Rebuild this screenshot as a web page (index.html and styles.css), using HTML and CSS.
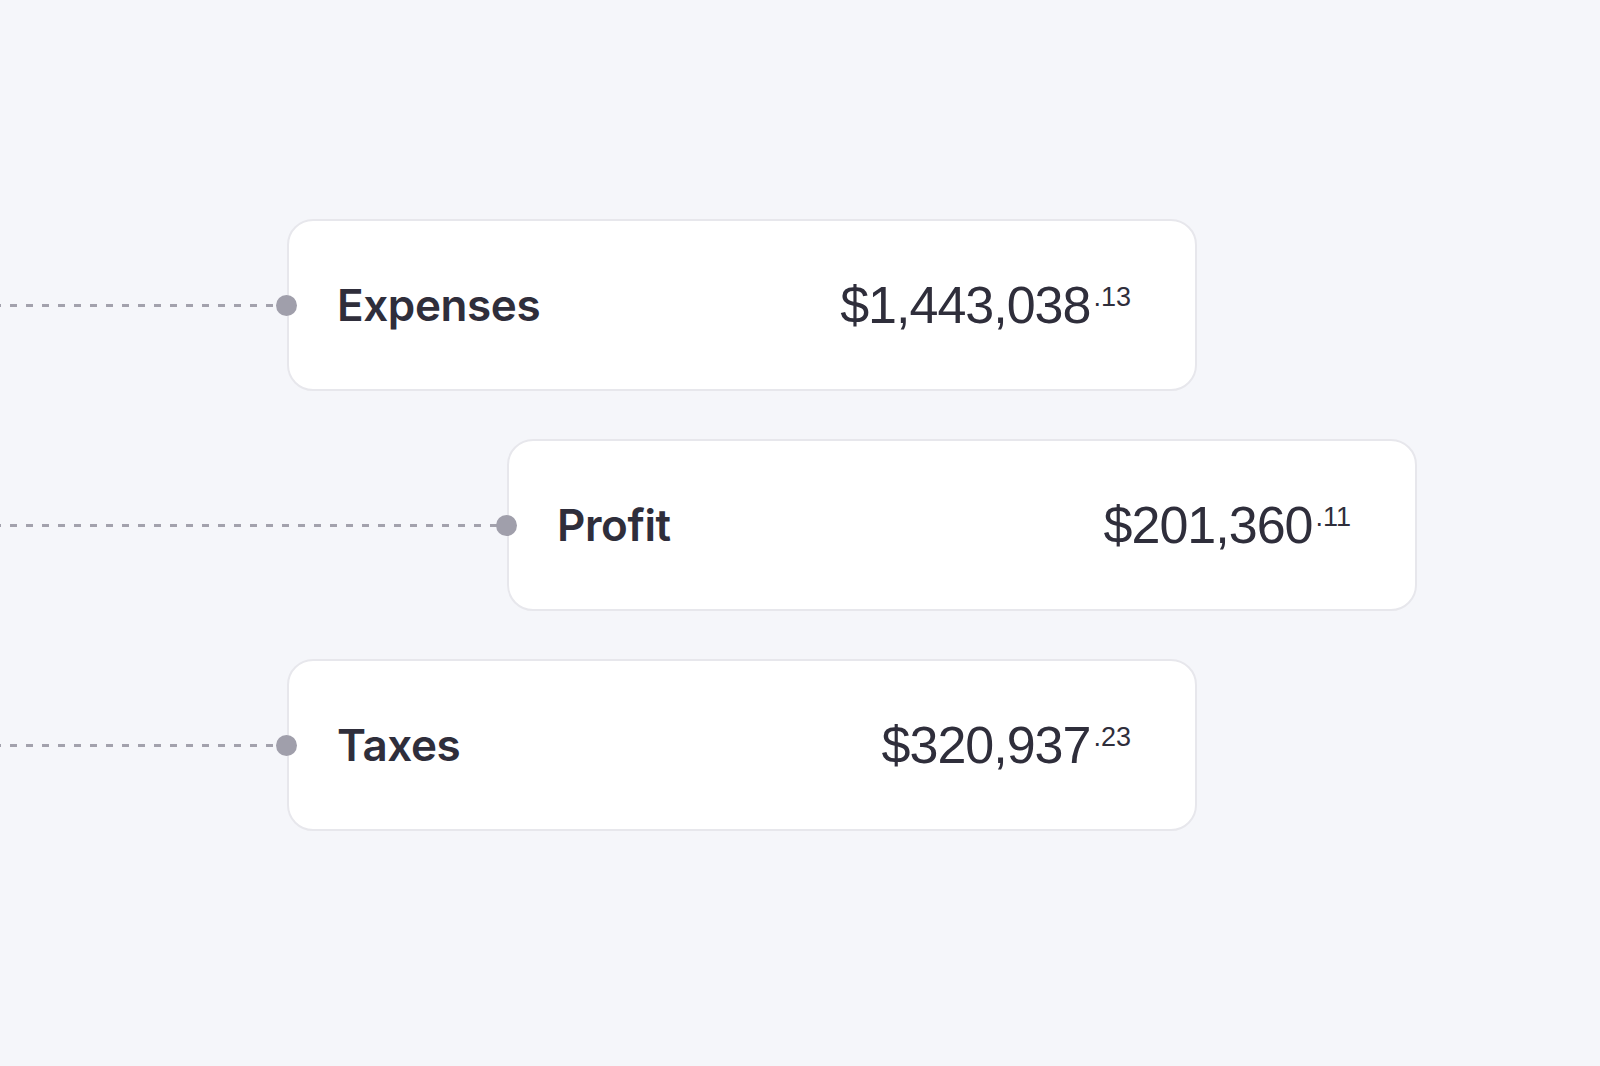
FILE: index.html
```html
<!DOCTYPE html>
<html lang="en">
<head>
  <meta charset="UTF-8">
  <meta name="viewport" content="width=device-width, initial-scale=1.0">
  <title>Breakdown</title>
  <link rel="stylesheet" href="styles.css">
</head>
<body>

  <!-- Breakdown rows: connector line + card -->
  <div class="flow">
    <div class="row">
      <div class="connector short"></div>
      <div class="card">
        <span class="dot"></span>
        <span class="label">Expenses</span>
        <span class="amount"><span class="whole">$1,443,038</span><span class="cents">.13</span></span>
      </div>
    </div>

    <div class="row">
      <div class="connector long"></div>
      <div class="card">
        <span class="dot"></span>
        <span class="label">Profit</span>
        <span class="amount"><span class="whole">$201,360</span><span class="cents">.11</span></span>
      </div>
    </div>

    <div class="row">
      <div class="connector short"></div>
      <div class="card">
        <span class="dot"></span>
        <span class="label">Taxes</span>
        <span class="amount"><span class="whole">$320,937</span><span class="cents">.23</span></span>
      </div>
    </div>
  </div>

</body>
</html>
```

FILE: styles.css
```css
* { margin: 0; padding: 0; box-sizing: border-box; }
body { background: #f5f6fa; font-family: 'Inter', sans-serif; color: #2f2e3b; height: 100vh; overflow: hidden; }

.flow { display: flex; flex-direction: column; gap: 48px; padding-top: 219px; }
.row { display: flex; align-items: center; }

/* Dashed lead-in line */
.connector {
  height: 3px;
  background-image: linear-gradient(to right, #a3a2ad 0 7px, transparent 7px 16px);
  background-size: 16px 3px;
  background-repeat: repeat-x;
  background-position: 10px 0;
}
.connector.short { width: 287px; }
.connector.long { width: 507px; }

.card {
  position: relative;
  width: 910px;
  height: 172px;
  background: #fff;
  border: 2px solid #e7e7ec;
  border-radius: 26px;
  display: flex;
  align-items: center;
  justify-content: space-between;
  padding: 0 64px 0 48px;
}

/* Dot sitting on the card edge */
.dot {
  position: absolute;
  left: -13px;
  top: 50%;
  width: 21px;
  height: 21px;
  margin-top: -10px;
  border-radius: 50%;
  background: #a09fab;
}

.label { font-size: 44px; font-weight: 600; line-height: 1; letter-spacing: -0.4px; }

.amount { display: flex; align-items: flex-start; font-family: 'Liberation Sans', Arial, sans-serif; }
.whole { font-size: 52px; line-height: 1; letter-spacing: -1px; }
.cents { font-size: 27px; line-height: 1; margin-top: 5px; margin-left: 3px; }
```
